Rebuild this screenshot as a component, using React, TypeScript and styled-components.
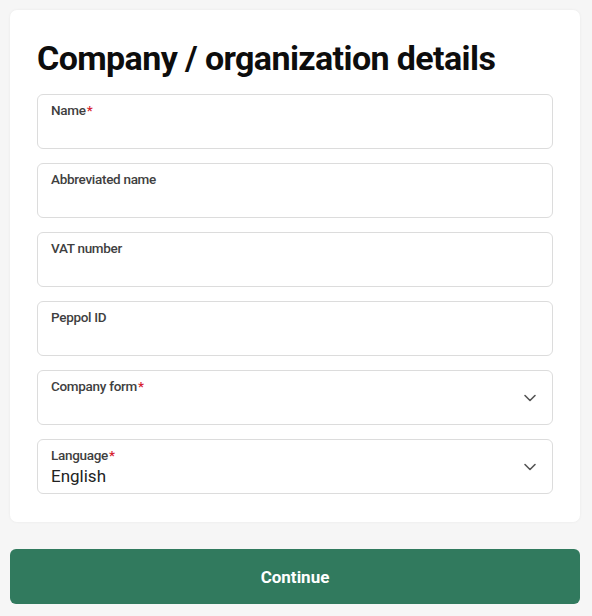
import styled, { createGlobalStyle } from 'styled-components';

const GlobalStyle = createGlobalStyle`
  body {
    margin: 0;
    background-color: #f6f6f6;
    font-family: Roboto, "Liberation Sans", sans-serif;
  }
`;

const Page = styled.div`
  padding: 10px 12px 12px 10px;
  display: flex;
  flex-direction: column;
  gap: 27px;
`;

const Card = styled.div`
  background-color: #fff;
  border-radius: 7px;
  box-shadow: 0 0 3px rgba(0, 0, 0, 0.06);
  padding: 27px 27px 28px;
  display: flex;
  flex-direction: column;
  gap: 14px;
`;

const Title = styled.h1`
  margin: 2px 0 3px;
  font-size: 34px;
  line-height: 38px;
  font-weight: 700;
  color: #0d0d0d;
  letter-spacing: -0.6px;
`;

const Field = styled.div`
  height: 55px;
  box-sizing: border-box;
  border: 1px solid #dcdcdc;
  border-radius: 6px;
  padding: 7px 13px 0;
  position: relative;
  display: flex;
  flex-direction: column;
`;

const Label = styled.span`
  font-size: 13.5px;
  line-height: 16px;
  font-weight: 500;
  color: #3f3f3f;
  letter-spacing: -0.3px;
`;

const Required = styled.span`
  color: #d6232f;
  margin-left: 1px;
`;

const Value = styled.span`
  margin-top: 2px;
  font-size: 17px;
  line-height: 22px;
  color: #222;
`;

const Chevron = styled.svg`
  position: absolute;
  right: 15px;
  top: 50%;
  transform: translateY(-50%);
  width: 14px;
  height: 14px;
  color: #555;
`;

const Button = styled.button`
  height: 55px;
  border: none;
  border-radius: 6px;
  background-color: #317a5e;
  color: #fff;
  font-family: Roboto, "Liberation Sans", sans-serif;
  font-size: 17px;
  font-weight: 700;
  cursor: pointer;
`;

type FieldProps = { label: string; required?: boolean; select?: boolean; value?: string };

const FormField = ({ label, required, select, value }: FieldProps) => (
  <Field>
    <Label>
      {label}
      {required && <Required>*</Required>}
    </Label>
    {value && <Value>{value}</Value>}
    {select && (
      <Chevron viewBox="0 0 14 14" fill="none" stroke="currentColor" strokeWidth="1.6" strokeLinecap="round" strokeLinejoin="round">
        <path d="M2 4.5 L7 9.5 L12 4.5" />
      </Chevron>
    )}
  </Field>
);

export default function App() {
  return (
    <>
      <GlobalStyle />
      <Page>
        <Card>
          <Title>Company / organization details</Title>
          <FormField label="Name" required />
          <FormField label="Abbreviated name" />
          <FormField label="VAT number" />
          <FormField label="Peppol ID" />
          <FormField label="Company form" required select />
          <FormField label="Language" required select value="English" />
        </Card>
        <Button>Continue</Button>
      </Page>
    </>
  );
}
